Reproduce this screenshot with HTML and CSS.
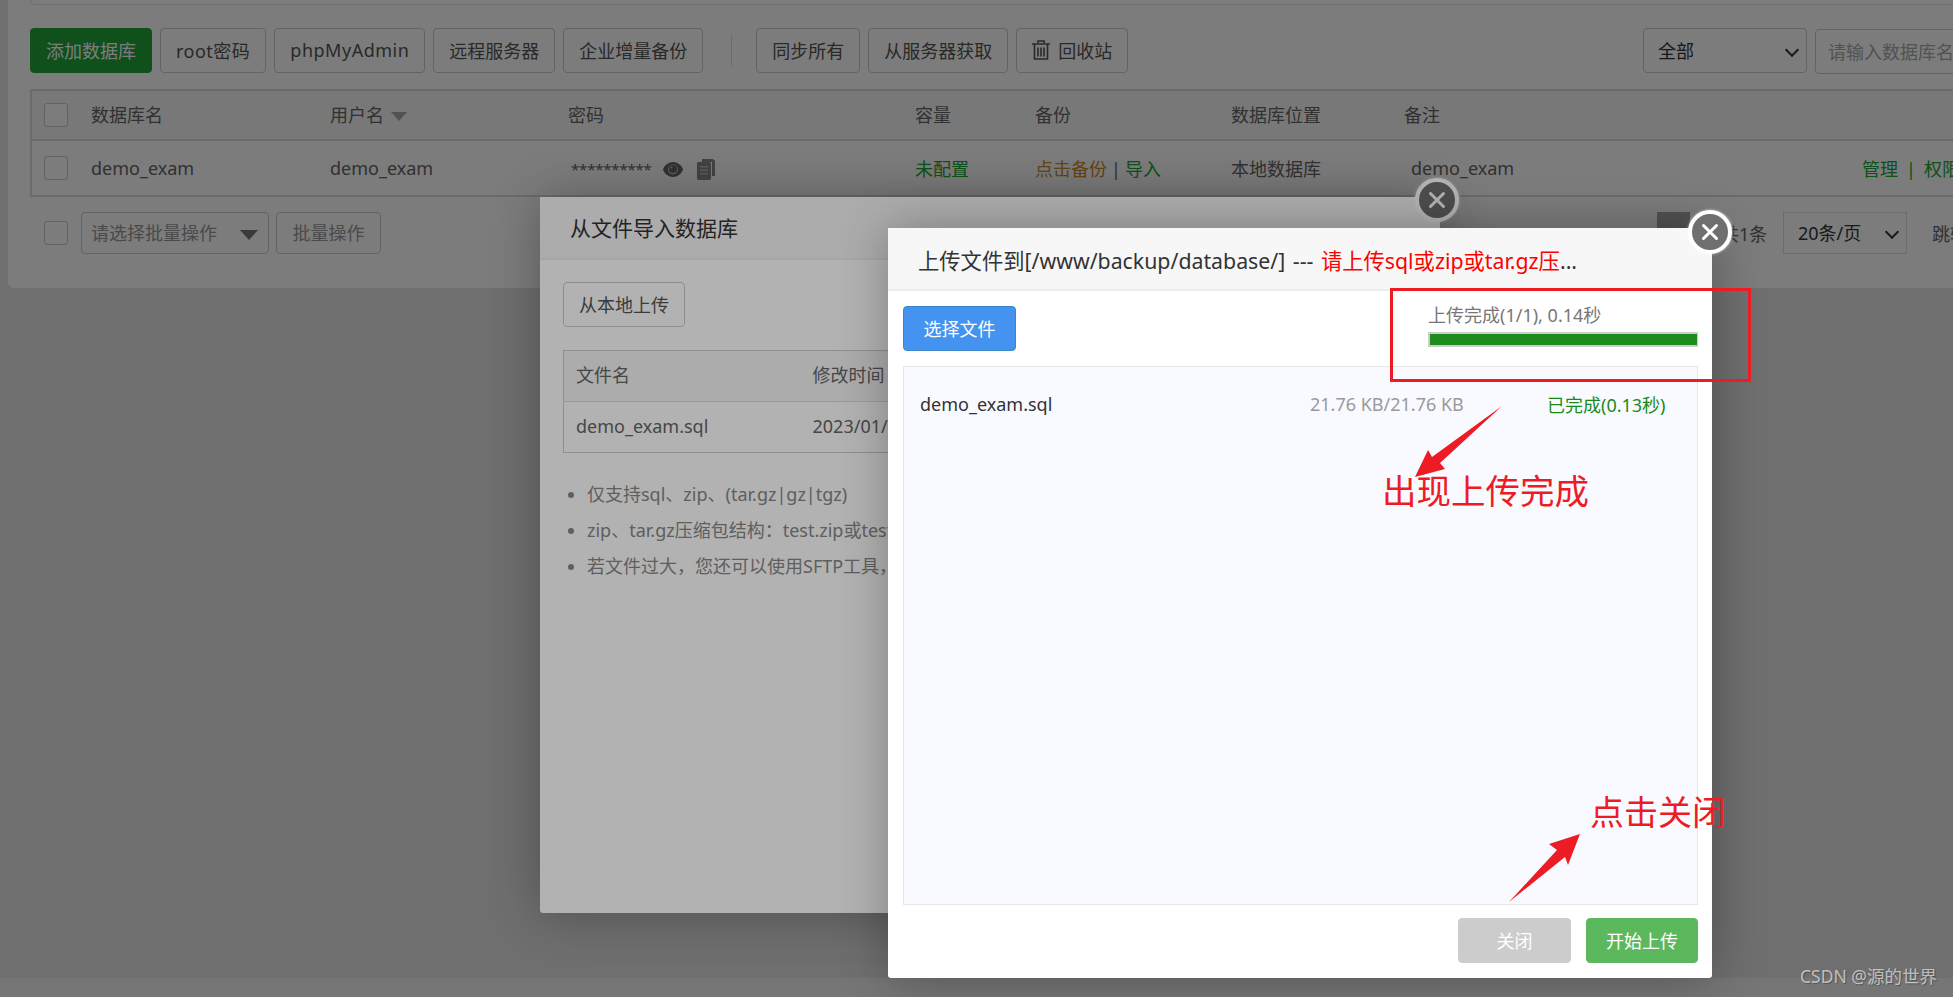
FILE: index.html
```html
<!DOCTYPE html>
<html lang="zh-CN">
<head>
  <meta charset="UTF-8">
  <title>数据库管理</title>
  <link rel="stylesheet" href="styles.css">
</head>
<body>
  <div class="panel">
    <div class="top-strip"></div>

    <div class="toolbar">
      <button class="btn btn-green">添加数据库</button>
      <button class="btn btn-wide">root密码</button>
      <button class="btn btn-wide">phpMyAdmin</button>
      <button class="btn">远程服务器</button>
      <button class="btn">企业增量备份</button>
      <span class="divider"></span>
      <button class="btn">同步所有</button>
      <button class="btn">从服务器获取</button>
      <button class="btn btn-trash">
        <svg width="18" height="20" viewBox="0 0 18 20"><path d="M6 3V1h6v2M0 4h18M2.500 4v15h13V4M6 7.500v9M9 7.500v9M12 7.500v9" fill="none" stroke="#555" stroke-width="1.600"/></svg>
        回收站
      </button>
      <div class="search">
        <span class="select-wrap select-all"><select><option>全部</option></select></span>
        <input class="search-input" placeholder="请输入数据库名称">
      </div>
    </div>

    <table class="db-table">
      <colgroup>
        <col class="c-check"><col class="c-name"><col class="c-user"><col class="c-pass">
        <col class="c-size"><col class="c-backup"><col class="c-place"><col class="c-note"><col>
      </colgroup>
      <thead>
        <tr>
          <th><span class="check"></span></th>
          <th>数据库名</th>
          <th>用户名<span class="sort"></span></th>
          <th>密码</th>
          <th>容量</th>
          <th>备份</th>
          <th>数据库位置</th>
          <th>备注</th>
          <th></th>
        </tr>
      </thead>
      <tbody>
        <tr>
          <td><span class="check"></span></td>
          <td>demo_exam</td>
          <td>demo_exam</td>
          <td class="pass">
            <span class="stars">**********</span>
            <svg width="20" height="15" viewBox="0 0 20 15"><path d="M10 0C15 0 19 4 20 7.500 19 11 15 15 10 15 5 15 1 11 0 7.500 1 4 5 0 10 0z" fill="#666"/><circle cx="10" cy="7.500" r="5" fill="#c4c4c4"/><circle cx="10" cy="7" r="4" fill="#666"/><circle cx="8.500" cy="5.500" r="1" fill="#c4c4c4"/></svg>
            <svg class="copy" width="18" height="21" viewBox="0 0 18 21"><path d="M5 0h11l2 2v15h-3V3H5z" fill="#888"/><path d="M1 3h12l1 1v16l-1 1H1l-1-1V4z" fill="#888"/><path d="M3 7h8v1.500H3zM3 10.500h8V12H3zM3 14h8v1.500H3z" fill="#bbb"/></svg>
          </td>
          <td class="green">未配置</td>
          <td><span class="orange">点击备份</span><span class="bar">|</span><span class="green">导入</span></td>
          <td>本地数据库</td>
          <td class="note">demo_exam</td>
          <td class="ops"><span class="green">管理</span><span class="sep">|</span><span class="green">权限</span></td>
        </tr>
      </tbody>
    </table>

    <div class="batch">
      <span class="check"></span>
      <div class="batch-select">请选择批量操作<span class="caret"></span></div>
      <button class="btn btn-light">批量操作</button>
      <div class="pager">
        <span class="page-cur"></span>
        <span class="page-total">共1条</span>
        <span class="select-wrap page-size"><select><option>20条/页</option></select></span>
        <span class="page-jump">跳转到</span>
      </div>
    </div>
  </div>
  <div class="footer"></div>

  <div class="shade"></div>

  <div class="modal modal-import">
    <div class="modal-title">从文件导入数据库</div>
    <div class="modal-body">
      <button class="btn">从本地上传</button>
      <table class="file-table">
        <thead><tr><th class="f-name">文件名</th><th>修改时间</th></tr></thead>
        <tbody><tr><td>demo_exam.sql</td><td>2023/01/16 15:18</td></tr></tbody>
      </table>
      <ul class="tips">
        <li>仅支持sql、zip、(tar.gz|gz|tgz)</li>
        <li>zip、tar.gz压缩包结构：test.zip或test.tar.gz压缩包内</li>
        <li>若文件过大，您还可以使用SFTP工具，将数据库文件上传</li>
      </ul>
    </div>
    <span class="close">
      <svg width="36" height="36" viewBox="0 0 36 36"><path d="M11.500 11.500l13 13M24.500 11.500l-13 13" stroke="#fff" stroke-width="3" stroke-linecap="round"/></svg>
    </span>
  </div>

  <div class="shade"></div>

  <div class="modal modal-upload">
    <div class="modal-title modal-title-light">上传文件到[/www/backup/database/] --- <span class="red">请上传sql或zip或tar.gz压</span>...</div>
    <div class="upload-head">
      <button class="btn btn-blue">选择文件</button>
      <div class="progress">
        <div class="progress-text">上传完成(1/1), 0.14秒</div>
        <div class="progress-bar"><div class="progress-fill"></div></div>
      </div>
    </div>
    <div class="file-box">
      <div class="file-row">
        <span class="file-name">demo_exam.sql</span>
        <span class="file-size">21.76 KB/21.76 KB</span>
        <span class="file-state">已完成(0.13秒)</span>
      </div>
    </div>
    <div class="modal-foot">
      <button class="btn btn-grey">关闭</button>
      <button class="btn btn-start">开始上传</button>
    </div>
    <span class="close close-top">
      <svg width="36" height="36" viewBox="0 0 36 36"><path d="M11.500 11.500l13 13M24.500 11.500l-13 13" stroke="#fff" stroke-width="3" stroke-linecap="round"/></svg>
    </span>
  </div>

  <svg class="marks" width="1953" height="997" viewBox="0 0 1953 997">
    <rect x="1391.500" y="289.500" width="358" height="91" fill="none" stroke="#ed1c24" stroke-width="3"/>
    <polygon points="1502,406 1432,457 1428,450 1415,477 1445,469 1440,463" fill="#ed1c24"/>
    <polygon points="1509,902 1565,857 1568,865 1580,834 1549,844 1557,850" fill="#ed1c24"/>
  </svg>
  <div class="mark-text mark-done">出现上传完成</div>
  <div class="mark-text mark-close">点击关闭</div>
  <div class="watermark">CSDN @源的世界</div>
</body>
</html>
```

FILE: styles.css
```css
* {
  box-sizing: border-box;
}

html, body {
  margin: 0;
  height: 997px;
  overflow: hidden;
}

body {
  font-family: "Noto Sans", "Noto Sans CJK SC", sans-serif;
  font-size: 18px;
  color: #666;
  background-color: #e4e4e4;
  position: relative;
}

button, select, input {
  font-family: inherit;
  font-size: 18px;
}

.panel {
  width: 2060px;
  height: 288px;
  margin-left: 8px;
  padding: 0 20px 0 22px;
  background-color: #fff;
  border-radius: 0 0 6px 6px;
}

.top-strip {
  height: 5px;
  border: 1px solid #ddd;
  border-top: none;
  border-radius: 0 0 6px 6px;
}

.toolbar {
  display: flex;
  align-items: flex-start;
  gap: 8px;
  margin-top: 23px;
}

.btn {
  height: 45px;
  padding: 0 15px 2px;
  border: 1px solid #ccc;
  border-radius: 4px;
  background-color: #fff;
  color: #555;
  white-space: nowrap;
}

.btn-green {
  background-color: #20a53a;
  border-color: #20a53a;
  color: #fff;
}

.btn-wide {
  letter-spacing: 0.5px;
}

.btn-trash {
  display: flex;
  align-items: center;
  gap: 8px;
}

.divider {
  width: 1px;
  height: 32px;
  margin: 7px 16px 0 20px;
  background-color: #ddd;
}

.search {
  display: flex;
  gap: 8px;
  margin-left: auto;
}

.select-wrap {
  position: relative;
  display: block;
}

.select-wrap select {
  width: 100%;
  height: 100%;
  padding: 0 0 0 14px;
  appearance: none;
  border: 1px solid #ccc;
  border-radius: 4px;
  background-color: #fff;
  color: #333;
}

.select-wrap::after {
  content: "";
  position: absolute;
  top: 50%;
  right: 10px;
  width: 8px;
  height: 8px;
  margin-top: -6px;
  border-right: 2px solid #333;
  border-bottom: 2px solid #333;
  transform: rotate(45deg);
}

.select-all {
  width: 164px;
  height: 45px;
}

.search-input {
  width: 233px;
  height: 45px;
  margin-top: 1px;
  padding: 0 12px;
  border: 1px solid #ccc;
  border-radius: 4px;
}

.search-input::placeholder {
  color: #aaa;
}

.db-table {
  width: 2018px;
  margin-top: 15px;
  border: 2px solid #ddd;
  border-collapse: collapse;
  table-layout: fixed;
}

.c-check { width: 60px; }
.c-name { width: 239px; }
.c-user { width: 238px; }
.c-pass { width: 347px; }
.c-size { width: 120px; }
.c-backup { width: 196px; }
.c-place { width: 173px; }
.c-note { width: 446px; }

.db-table th {
  height: 50px;
  padding: 0 0 3px;
  font-weight: normal;
  text-align: left;
  background-color: #f6f6f6;
  border-bottom: 2px solid #ddd;
}

.db-table td {
  height: 56px;
  padding: 0;
}

.db-table th:first-child, .db-table td:first-child {
  padding: 0 0 0 12px;
}

.check {
  display: block;
  width: 24px;
  height: 24px;
  border: 1px solid #ccc;
  border-radius: 3px;
  background-color: #fff;
}

.sort {
  display: inline-block;
  margin-left: 7px;
  border: 8px solid transparent;
  border-top: 9px solid #aaa;
  border-bottom: none;
  vertical-align: middle;
}

.pass svg {
  vertical-align: middle;
  margin-left: 7px;
}

.pass .copy {
  margin-left: 9px;
}

.stars {
  margin-left: 3px;
  font-size: 15px;
  letter-spacing: -0.2px;
}

.green {
  color: #20a53a;
}

.orange {
  color: #cc8b2c;
}

.bar {
  margin: 0 4px;
}

.note {
  padding-left: 7px !important;
}

.sep {
  margin: 0 8px;
  color: #20a53a;
}

.ops {
  padding-left: 12px !important;
}

.batch {
  display: flex;
  align-items: center;
  gap: 7px;
  margin-top: 15px;
  padding-left: 14px;
}

.batch-select {
  position: relative;
  width: 188px;
  height: 42px;
  margin-left: 6px;
  padding-left: 9px;
  line-height: 40px;
  color: #999;
  border: 1px solid #ccc;
  border-radius: 4px;
}

.caret {
  position: absolute;
  top: 17px;
  right: 10px;
  border: 9px solid transparent;
  border-top: 10px solid #777;
  border-bottom: none;
}

.btn-light {
  height: 42px;
  width: 105px;
  padding: 0 0 2px;
  color: #999;
}

.pager {
  display: flex;
  align-items: center;
  margin-left: auto;
}

.page-cur {
  width: 33px;
  height: 42px;
  background-color: #aaa;
}

.page-total {
  width: 93px;
  padding-left: 31px;
  white-space: nowrap;
}

.page-size {
  width: 124px;
  height: 42px;
}

.page-size select {
  border-color: #ddd;
  border-radius: 0;
}

.page-jump {
  width: 116px;
  margin-left: 25px;
}

.footer {
  height: 19px;
  margin-top: 690px;
  background-color: #f3f3f3;
}

.shade {
  position: absolute;
  inset: 0;
  background-color: rgba(0, 0, 0, 0.3);
}

.modal {
  position: absolute;
  background-color: #fff;
  border-radius: 3px;
  box-shadow: 1px 1px 50px rgba(0, 0, 0, 0.3);
}

.modal-import {
  left: 540px;
  top: 197px;
  width: 900px;
  height: 716px;
}

.modal-upload {
  left: 888px;
  top: 228px;
  width: 824px;
  height: 750px;
}

.modal-title {
  height: 63px;
  padding-left: 30px;
  font-size: 21px;
  line-height: 63px;
  color: #333;
  border-bottom: 2px solid #eee;
  background-color: #f7f7f7;
  white-space: nowrap;
}

.modal-title-light {
  font-size: 21.300px;
  line-height: 65px;
  word-spacing: 2px;
}

.red {
  color: #f00;
}

.close {
  position: absolute;
  top: -19px;
  right: -19px;
  display: block;
  width: 44px;
  height: 44px;
  background-color: #6f6f6f;
  border: 4px solid #fff;
  border-radius: 50%;
  box-shadow: 0 0 3px rgba(255, 255, 255, 0.7);
}

.close svg {
  display: block;
}

.close-top {
  top: -18px;
  right: -20px;
}

.modal-body {
  padding: 22px 23px;
}

.file-table {
  width: 100%;
  margin-top: 23px;
  border: 1px solid #ccc;
  border-collapse: collapse;
}

.file-table th {
  height: 51px;
  padding: 0 12px 4px;
  font-weight: normal;
  text-align: left;
  background-color: #f6f6f6;
  border-bottom: 1px solid #ddd;
}

.file-table td {
  height: 51px;
  padding: 0 12px 3px;
}

.f-name {
  width: 237px;
}

.tips {
  margin: 23px 0 0;
  padding-left: 24px;
  color: #888;
  line-height: 36px;
}

.upload-head {
  display: flex;
  justify-content: space-between;
  height: 75px;
  padding: 15px 14px 0 15px;
}

.btn-blue {
  width: 113px;
  padding: 0 0 2px;
  background-color: #4493f0;
  border-color: #3a85c8;
  color: #fff;
}

.progress {
  width: 270px;
  margin-top: -4px;
}

.progress-text {
  height: 27px;
  line-height: 27px;
  color: #777;
}

.progress-bar {
  height: 15px;
  margin-top: 3px;
  border: 2px solid #ccc;
  border-right-width: 1px;
}

.progress-fill {
  height: 100%;
  background-color: #1c8c1c;
}

.file-box {
  height: 539px;
  margin: 0 14px 0 15px;
  padding: 0 16px;
  background-color: #f9faff;
  border: 1px solid #e6e6e6;
}

.file-row {
  display: flex;
  align-items: center;
  height: 74px;
  color: #333;
}

.file-name {
  width: 390px;
}

.file-size {
  width: 237px;
  color: #999;
}

.file-state {
  color: #1a8a1a;
}

.modal-foot {
  display: flex;
  justify-content: flex-end;
  gap: 15px;
  padding: 13px 14px 0 0;
}

.btn-grey {
  width: 113px;
  padding: 0 0 2px;
  background-color: #ccc;
  border-color: #ccc;
  color: #fff;
}

.btn-start {
  width: 112px;
  padding: 0 0 2px;
  background-color: #5cb85c;
  border-color: #5cb85c;
  color: #fff;
}

.marks {
  position: absolute;
  left: 0;
  top: 0;
}

.mark-text {
  position: absolute;
  font-size: 34px;
  line-height: 40px;
  color: #ed1c24;
  white-space: nowrap;
}

.mark-done {
  left: 1382px;
  top: 471px;
  font-size: 34.500px;
}

.mark-close {
  left: 1590px;
  top: 792px;
}

.watermark {
  position: absolute;
  left: 1800px;
  top: 965px;
  font-size: 17.500px;
  line-height: 22px;
  color: rgba(255, 255, 255, 0.6);
  text-shadow: 1px 1px 1px rgba(0, 0, 0, 0.3);
  white-space: nowrap;
}
```
